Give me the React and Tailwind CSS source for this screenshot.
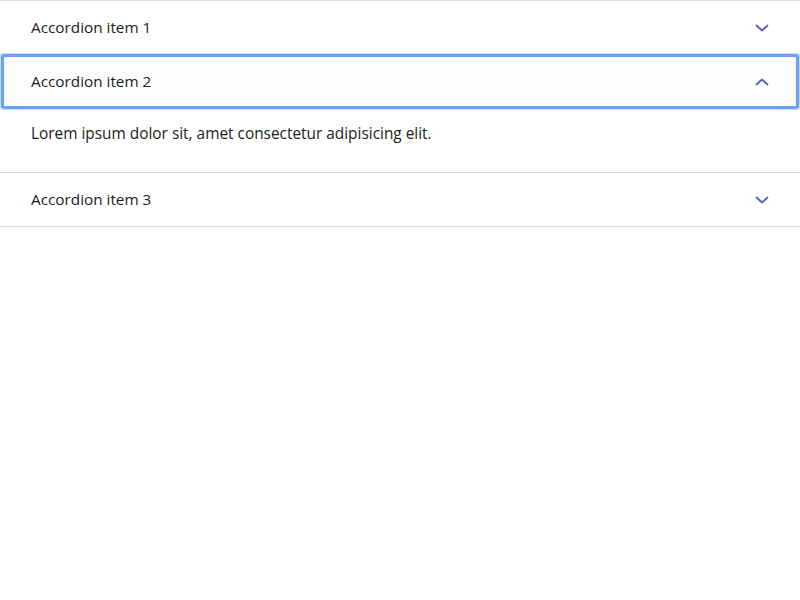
import React from "react";

function Chevron({ up }) {
  return (
    <svg width="14" height="14" viewBox="0 0 14 14" fill="none" className="text-[#5560b0]">
      {up ? (
        <path d="M1.5 9.5 L7 4.5 L12.5 9.5" stroke="currentColor" strokeWidth="1.7" strokeLinecap="round" strokeLinejoin="round" />
      ) : (
        <path d="M1.5 4.5 L7 9.5 L12.5 4.5" stroke="currentColor" strokeWidth="1.7" strokeLinecap="round" strokeLinejoin="round" />
      )}
    </svg>
  );
}

function Header({ label, open, focused }) {
  return (
    <div className={"relative flex h-[53px] items-center justify-between pl-[31px] pr-[31px] " + (focused ? "bg-[#fdfdfe]" : "bg-white")}>
      <span className="text-[15.3px] text-[#1a1d21]">{label}</span>
      <Chevron up={open} />
      {focused && (
        <div className="pointer-events-none absolute -top-px -bottom-px left-px right-px rounded-[3px] border-[3px] border-[#6a9ef8] shadow-[0_0_0_1px_rgba(106,158,248,0.35)]" />
      )}
    </div>
  );
}

export default function App() {
  return (
    <div className="min-h-[600px] w-[800px] bg-white" style={{ fontFamily: '"Open Sans", sans-serif' }}>
      <div className="border-t border-[#dcdcdc]">
        <div className="border-b border-[#dcdcdc]">
          <Header label="Accordion item 1" />
        </div>
        <div className="border-b border-[#dcdcdc]">
          <Header label="Accordion item 2" open focused />
          <div className="pl-[31px] pt-[15px] pb-[27px] text-[15.4px] leading-[22px] text-[#1a1d21]">
            Lorem ipsum dolor sit, amet consectetur adipisicing elit.
          </div>
        </div>
        <div className="border-b border-[#dcdcdc]">
          <Header label="Accordion item 3" />
        </div>
      </div>
    </div>
  );
}
